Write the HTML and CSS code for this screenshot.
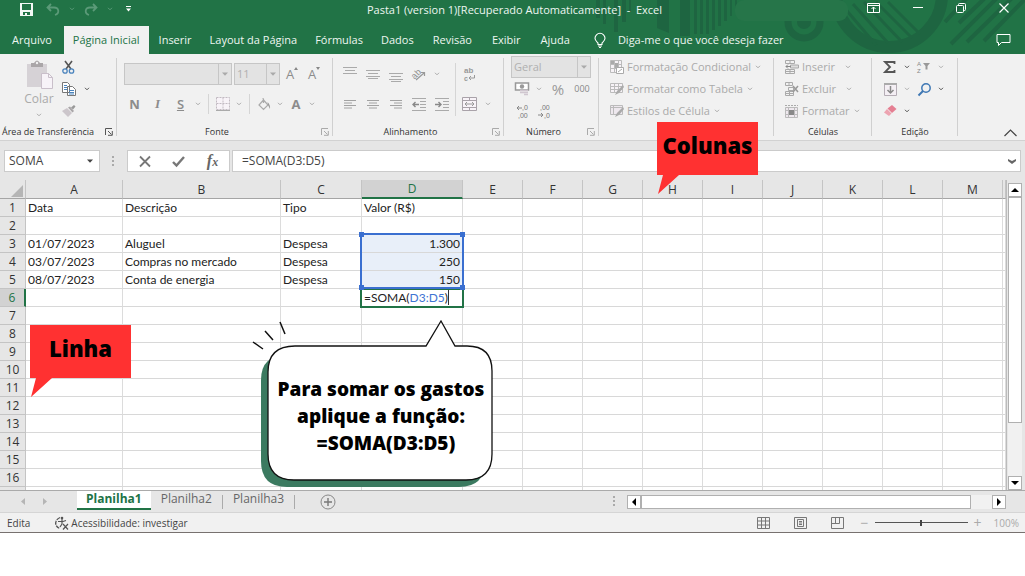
FILE: index.html
```html
<!DOCTYPE html>
<html lang="pt-BR">
<head>
<meta charset="utf-8">
<title>Pasta1 - Excel</title>
<link rel="stylesheet" href="styles.css">
</head>
<body>
<svg class="defs" aria-hidden="true">
  <symbol id="chev" viewBox="0 0 6 4"><path d="M1 .8l2 2 2-2" fill="none" stroke="currentColor"/></symbol>
  <symbol id="tri" viewBox="0 0 6 4"><path d="M0 .5h6L3 3.8z" fill="currentColor"/></symbol>
  <symbol id="launch" viewBox="0 0 8 8"><path d="M.5 7V.5H7M3 3l3.5 3.5M7.300 3v4.300H3" fill="none" stroke="currentColor"/></symbol>
</svg>
<div class="app">
  <header class="top">
    <svg class="decor" viewBox="0 0 440 54" aria-hidden="true">
      <g fill="#1e6541">
        <path d="M11 0h4v18h-4zM18 0h3v24h-3zM29 0h4v32h-4zM37 0h4v22h-4zM44 0h2v12h-2zM72 0h12v33l-12-5zM95 0h10v36H95zM109 0h3v34h-3zM115 0h3v34h-3zM121 0h3v34h-3zM127 0h3v30h-3zM133 0h3v26h-3zM139 0h3v21h-3zM145 0h2v16h-2zM150 0h2v12h-2z"/>
        <circle cx="219" cy="22" r="7"/>
      </g>
      <g fill="none" stroke="#1e6541">
        <circle cx="219" cy="22" r="16" stroke-width="7"/>
        <circle cx="304" cy="-6" r="53" stroke-width="12"/>
        <path d="M257 5l34 40M268 4l35 39M279 2l38 40M291 2l36 36M303 2l32 32" stroke-width="3"/>
        <path d="M360 22l22-24M374 23l26-25M366 44l46-46M382 42l45-44M399 41l42-43" stroke-width="4"/>
      </g>
      <rect x="150" y="0" width="113" height="21" rx="9" fill="#267549"/>
    </svg>
    <div class="titlebar">
      <div class="quick">
        <button aria-label="Salvar"><svg width="13" height="13" viewBox="0 0 13 13"><path fill="#f3f8f5" fill-rule="evenodd" d="M0 0h13v13H0zM2 1v6h9V1zM3 9v3h2v-2h2v2h3V9z"/></svg></button>
        <button class="dim" aria-label="Desfazer"><svg width="14" height="13" viewBox="0 0 14 13"><path d="M5 1L1.500 4.500 5 8M2 4.500h6c5 0 6 6 1 7.500" fill="none" stroke="currentColor" stroke-width="1.800"/></svg></button>
        <svg class="chev dim"><use href="#chev"/></svg>
        <button class="dim" aria-label="Refazer"><svg width="14" height="13" viewBox="0 0 14 13"><path d="M9 1l3.500 3.500L9 8M12 4.500H6c-5 0-6 6-1 7.500" fill="none" stroke="currentColor" stroke-width="1.800"/></svg></button>
        <svg class="chev dim"><use href="#chev"/></svg>
        <button class="more" aria-label="Personalizar"><svg width="5" height="6" viewBox="0 0 5 6"><path d="M0 0h5v1H0zM0 2.500h5L2.500 5.500z" fill="#fff"/></svg></button>
      </div>
      <h1 class="doc">Pasta1 (version 1)[Recuperado Automaticamente]&nbsp; -&nbsp; Excel</h1>
      <div class="window">
        <button aria-label="Opções da Faixa"><svg width="13" height="10" viewBox="0 0 13 10"><path d="M.5.500h12v9H.5zM.5 2.500h12M6.500 9V4M4.500 6l2-2 2 2" fill="none" stroke="#fff"/></svg></button>
        <button aria-label="Minimizar"><svg width="10" height="10" viewBox="0 0 10 10"><path d="M0 4.500h10" stroke="#fff"/></svg></button>
        <button aria-label="Restaurar"><svg width="10" height="10" viewBox="0 0 10 10"><rect x=".5" y="2.500" width="7" height="7" rx="1" fill="none" stroke="#fff"/><path d="M2.500 2V1.500q0-1 1-1h5q1 0 1 1v5q0 1-1 1H8" fill="none" stroke="#fff"/></svg></button>
        <button aria-label="Fechar"><svg width="10" height="10" viewBox="0 0 10 10"><path d="M.5.500l9 9M9.500.500l-9 9" stroke="#fff" stroke-width="1.200"/></svg></button>
      </div>
    </div>
    <nav class="tabs">
      <button>Arquivo</button>
      <button class="on">Página Inicial</button>
      <button class="snug">Inserir</button>
      <button class="snug">Layout da Página</button>
      <button class="snug">Fórmulas</button>
      <button class="snug">Dados</button>
      <button>Revisão</button>
      <button>Exibir</button>
      <button>Ajuda</button>
      <button class="tell"><svg width="12" height="15" viewBox="0 0 12 15"><path d="M4 11.500V10C2.500 8.500 1 7.500 1 5.300a5 5 0 0 1 10 0C11 7.500 9.500 8.500 8 10v1.500zM4 13h4M5 14.500h2" fill="none" stroke="#fff" stroke-width="1.100"/></svg>Diga-me o que você deseja fazer</button>
      <button class="comment" aria-label="Comentários"><svg width="15" height="12" viewBox="0 0 15 12"><path d="M1 .5h13v8H5.500l-3 3v-3H1z" fill="none" stroke="#fff"/></svg></button>
    </nav>
  </header>

  <section class="ribbon">
    <div class="group clip">
      <div class="body">
        <button class="paste"><svg width="27" height="29" viewBox="0 0 27 29"><path d="M1 4h20v23H1z" fill="#d6d2d6"/><path d="M5 3h3q3-5 6 0h3v4H5z" fill="#aaa6a8"/><circle cx="11" cy="3" r="1.200" fill="#f1f1f1"/><path d="M15.500 13.500h7l4 4v11h-11z" fill="#f7f3f8" stroke="#c9bfca"/><path d="M22.500 13.500v4h4" fill="none" stroke="#c9bfca"/></svg>Colar<svg class="chev"><use href="#chev"/></svg></button>
        <div class="tools">
          <button aria-label="Recortar"><svg width="13" height="14" viewBox="0 0 13 14"><path d="M3 1l6 8M10 1L4 9" stroke="#555" stroke-width="1.600"/><circle cx="3" cy="11" r="2.200" fill="none" stroke="#4b84bd" stroke-width="1.300"/><circle cx="9.500" cy="11" r="2.200" fill="none" stroke="#4b84bd" stroke-width="1.300"/></svg></button>
          <button class="dark" aria-label="Copiar"><svg width="14" height="14" viewBox="0 0 14 14"><path d="M.5.500h5l2 2v8h-7zM5.500 4.500h5l3 3v6h-8z" fill="#fff" stroke="#777"/><path d="M2 3.500h3M2 5.500h3M2 7.500h3M7 8.500h5M7 10.500h5M7 12h5" stroke="#4b84bd"/></svg><svg class="chev"><use href="#chev"/></svg></button>
          <button aria-label="Pincel"><svg width="14" height="12" viewBox="0 0 14 12"><path d="M9 2.500L12 0l1.500 1.500L11 4.500z" fill="#999"/><path d="M6 2.500l2-1L12 6l-1.500 1.500z" fill="#a9a6a8"/><path d="M0 6l5-3 5 5-4 4z" fill="#ccc6cb"/></svg></button>
        </div>
      </div>
      <footer>Área de Transferência<svg class="launch dark"><use href="#launch"/></svg></footer>
    </div>

    <div class="group font">
      <div class="body rows">
        <div class="line">
          <label class="combo wide"><select aria-label="Fonte"><option></option></select><svg class="tri"><use href="#tri"/></svg></label>
          <label class="combo"><select aria-label="Tamanho"><option>11</option></select><svg class="tri"><use href="#tri"/></svg></label>
          <button class="grow">A<svg width="4" height="3" viewBox="0 0 4 3"><path d="M0 3l2-3 2 3z" fill="#888"/></svg></button>
          <button class="grow">A<svg width="4" height="3" viewBox="0 0 4 3"><path d="M0 0l2 3 2-3z" fill="#888"/></svg></button>
        </div>
        <div class="line letters">
          <button><b>N</b></button><button><i>I</i></button><button><u>S</u></button>
          <svg class="chev"><use href="#chev"/></svg>
          <span class="bar"></span>
          <button class="narrow" aria-label="Bordas"><svg width="14" height="14" viewBox="0 0 14 14"><path d="M.5.500h13v12H.5zM7 .5v12M.5 6.500h13" fill="#f8f3f8" stroke="#c2bac2" stroke-dasharray="2 1"/><path d="M0 13.500h14" stroke="#aaa"/></svg></button>
          <svg class="chev"><use href="#chev"/></svg>
          <span class="bar"></span>
          <button class="narrow" aria-label="Preenchimento"><svg width="13" height="13" viewBox="0 0 13 13"><path d="M5.500 2L1 7l4.500 4.500L10 7zM5.500 5V1.500q0-1-1-1" fill="none" stroke="#aaa" stroke-width="1.200"/><path d="M9.500 4q3 3 2.500 7l-2-4z" fill="#999"/></svg></button>
          <svg class="chev"><use href="#chev"/></svg>
          <button class="narrow"><b>A</b></button>
          <svg class="chev"><use href="#chev"/></svg>
        </div>
      </div>
      <footer>Fonte<svg class="launch"><use href="#launch"/></svg></footer>
    </div>

    <div class="group align">
      <div class="body">
        <div class="rows">
          <div class="line">
            <button aria-label="Em cima"><svg width="14" height="15" viewBox="0 0 14 15"><path d="M0 .5h14M2 3.500h10M0 6.500h14" stroke="#aaa"/></svg></button>
            <button aria-label="No meio"><svg width="14" height="15" viewBox="0 0 14 15"><path d="M0 3.500h14M2 6.500h10M0 9.500h14M2 11.500h10" stroke="#aaa"/></svg></button>
            <button aria-label="Embaixo"><svg width="14" height="15" viewBox="0 0 14 15"><path d="M0 6.500h14M2 9.500h10M0 12.500h14M2 14.500h10" stroke="#aaa"/></svg></button>
            <button aria-label="Orientação"><svg width="15" height="13" viewBox="0 0 15 13"><text x="0" y="9" font-size="9" fill="#8f8f8f" transform="rotate(-45 5 6)">ab</text><path d="M5 12l8-7M10 4.500h3.500V8" fill="none" stroke="#999" stroke-width="1.200"/></svg></button>
            <svg class="chev"><use href="#chev"/></svg>
          </div>
          <div class="line">
            <button aria-label="Esquerda"><svg width="12" height="9" viewBox="0 0 12 9"><path d="M0 .5h12M0 3h8M0 5.500h12M0 8h8" stroke="#a2a2a2"/></svg></button>
            <button aria-label="Centro"><svg width="12" height="9" viewBox="0 0 12 9"><path d="M0 .5h12M2 3h8M0 5.500h12M2 8h8" stroke="#a2a2a2"/></svg></button>
            <button aria-label="Direita"><svg width="12" height="9" viewBox="0 0 12 9"><path d="M0 .5h12M4 3h8M0 5.500h12M4 8h8" stroke="#a2a2a2"/></svg></button>
            <button aria-label="Diminuir recuo"><svg width="14" height="13" viewBox="0 0 14 13"><path d="M0 .5h14M8 3.500h6M8 6.500h6M8 9.500h6M0 12.500h14" stroke="#aaa"/><path d="M7 6.500H1M3.500 4L1 6.500 3.500 9" fill="none" stroke="#888" stroke-width="1.400"/></svg></button>
            <button aria-label="Aumentar recuo"><svg width="14" height="13" viewBox="0 0 14 13"><path d="M0 .5h14M8 3.500h6M8 6.500h6M8 9.500h6M0 12.500h14" stroke="#aaa"/><path d="M0 6.500h6M3.500 4L6 6.500 3.500 9" fill="none" stroke="#888" stroke-width="1.400"/></svg></button>
          </div>
        </div>
        <span class="bar tall"></span>
        <div class="rows">
          <div class="line"><button aria-label="Quebrar texto"><svg width="13" height="15" viewBox="0 0 13 15"><text x="1" y="6" font-size="8" font-weight="bold" fill="#999">ab</text><text x="1" y="14" font-size="7" font-weight="bold" fill="#999">c</text><path d="M11.500 8v3H6M8 9l-2 2 2 2" fill="none" stroke="#999"/></svg></button></div>
          <div class="line"><button aria-label="Mesclar"><svg width="15" height="14" viewBox="0 0 15 14"><path d="M.5.500h14v13H.5zM.5 3.500h14M.5 10.500h14M7.500.500v3M7.500 10.500v3" fill="#f8f3f8" stroke="#a9a2a9"/><path d="M3 7h9M5 5L3 7l2 2M10 5l2 2-2 2" fill="none" stroke="#999"/></svg></button><svg class="chev"><use href="#chev"/></svg></div>
        </div>
      </div>
      <footer>Alinhamento<svg class="launch"><use href="#launch"/></svg></footer>
    </div>

    <div class="group number">
      <div class="body rows">
        <label class="combo wide"><select aria-label="Formato"><option>Geral</option></select><svg class="tri"><use href="#tri"/></svg></label>
        <div class="line">
          <button aria-label="Moeda"><svg width="15" height="14" viewBox="0 0 15 14"><path d="M.5 1h13v7H.5z" fill="#fff" stroke="#999" stroke-width="1.500"/><circle cx="7" cy="4.500" r="2.200" fill="#999"/><path d="M5 8.500h8M5 10.500h8M9 12.500h4" stroke="#cfc6cf" stroke-width="1.500"/></svg></button>
          <svg class="chev"><use href="#chev"/></svg>
          <button class="pct">%</button>
          <button class="thou">000</button>
        </div>
        <div class="line">
          <button aria-label="Aumentar casas"><svg width="13" height="15" viewBox="0 0 13 15"><text x="6" y="6" font-size="7" fill="#777">,0</text><text x="2" y="14" font-size="7" fill="#777">,00</text><path d="M6 4H1M3 2L1 4l2 2" fill="none" stroke="#888"/></svg></button>
          <button aria-label="Diminuir casas"><svg width="13" height="15" viewBox="0 0 13 15"><text x="2" y="6" font-size="7" fill="#777">,00</text><text x="6" y="14" font-size="7" fill="#777">,0</text><path d="M0 11h5M3 9l2 2-2 2" fill="none" stroke="#888"/></svg></button>
        </div>
      </div>
      <footer>Número<svg class="launch"><use href="#launch"/></svg></footer>
    </div>

    <div class="group styles">
      <div class="body rows list">
        <button><svg width="14" height="14" viewBox="0 0 14 14"><path d="M.5.500h11v12H.5zM4.500.500v12M8.500.500v12M.5 4.500h11M.5 8.500h11" fill="#f6f2f6" stroke="#bbb"/><path d="M1 1h3v3H1zM5 3h3v5H5z" fill="#aaa"/><path d="M6.500 7.500h7v6h-7zM8 12l4-3" fill="#fff" stroke="#aaa"/></svg>Formatação Condicional<svg class="chev"><use href="#chev"/></svg></button>
        <button><svg width="14" height="14" viewBox="0 0 14 14"><path d="M.5 1.500h12v9H.5zM4.500 1.500v9M8.500 1.500v9M.5 4.500h12M.5 7.500h12" fill="#f6f2f6" stroke="#bbb"/><path d="M5 13l2-4 6-6 1 2-5 6z" fill="#aaa"/></svg>Formatar como Tabela<svg class="chev"><use href="#chev"/></svg></button>
        <button><svg width="14" height="14" viewBox="0 0 14 14"><path d="M.5 1.500h12v9H.5zM.5 3.500h12M3.500 1.500v9" fill="#eee8ee" stroke="#bbb"/><path d="M5 13l2-4 6-6 1 2-5 6z" fill="#aaa"/></svg>Estilos de Célula<svg class="chev"><use href="#chev"/></svg></button>
      </div>
    </div>

    <div class="group cells">
      <div class="body rows list">
        <button><svg width="14" height="14" viewBox="0 0 14 14"><path d="M.5.500h9v3h-9zM5 .5v3M.5 9.500h9v4h-9zM5 9.500v4M.5 11.500h9" fill="none" stroke="#aaa"/><path d="M5.500 5h8v3h-8z" fill="#ddd" stroke="#aaa"/><path d="M6 6.500H1M3 4.500l-2 2 2 2" fill="none" stroke="#888"/></svg>Inserir<svg class="chev far"><use href="#chev"/></svg></button>
        <button><svg width="14" height="14" viewBox="0 0 14 14"><path d="M.5.500h7v3h-7zM4 .5v3M3.500 5.500h5v3h-5zM.5 9.500h8v4h-8zM4.500 9.500v4M.5 11.500h8" fill="none" stroke="#aaa"/><path d="M8 4l5 6M13 4l-5 6" stroke="#999" stroke-width="1.500"/></svg>Excluir<svg class="chev far"><use href="#chev"/></svg></button>
        <button><svg width="14" height="14" viewBox="0 0 14 14"><path d="M0 1.500h13" stroke="#aaa" stroke-dasharray="2 1"/><path d="M.5 3.500h12v10H.5zM3.500 3.500v10M9.500 3.500v10M.5 6.500h12M.5 10.500h12" fill="#eee8ee" stroke="#bbb"/><path d="M4 6h5v5H4z" fill="#888"/></svg>Formatar<svg class="chev"><use href="#chev"/></svg></button>
      </div>
      <footer>Células</footer>
    </div>

    <div class="group edit">
      <div class="body rows">
        <div class="line dark"><button aria-label="Soma"><svg width="12" height="12" viewBox="0 0 12 12"><path d="M10.500 3V1H1l5 5-5 5h9.500V9" fill="none" stroke="#555" stroke-width="1.800"/></svg></button><svg class="chev"><use href="#chev"/></svg><button class="light" aria-label="Classificar"><svg width="14" height="13" viewBox="0 0 14 13"><text x="0" y="5" font-size="6" fill="#888">A</text><text x="0" y="12" font-size="6" fill="#888">Z</text><path d="M6 2h7L10.500 5v3.500H8.500V5z" fill="#999"/></svg></button><svg class="chev light"><use href="#chev"/></svg></div>
        <div class="line dark"><button aria-label="Preencher"><svg width="13" height="13" viewBox="0 0 13 13"><path d="M.5.500h12v12H.5z" fill="#f4eff4" stroke="#b5adb5"/><path d="M0 1h13" stroke="#aaa" stroke-width="2"/><path d="M6.500 3v7M3.500 7l3 3 3-3" fill="none" stroke="#888" stroke-width="1.500"/></svg></button><svg class="chev light"><use href="#chev"/></svg><button aria-label="Localizar"><svg width="15" height="13" viewBox="0 0 15 13"><circle cx="9" cy="5" r="4.200" fill="none" stroke="#3f78b4" stroke-width="1.500"/><path d="M6 8l-4.500 4.500" stroke="#3f78b4" stroke-width="2"/></svg></button><svg class="chev"><use href="#chev"/></svg></div>
        <div class="line dark"><button aria-label="Limpar"><svg width="13" height="12" viewBox="0 0 13 12"><path d="M8 0l4.500 4L8 8 3.500 3.500z" fill="#e57f92"/><path d="M3 4l4.500 4.500L5 11 0 7.500z" fill="#eda4b1"/></svg></button><svg class="chev"><use href="#chev"/></svg></div>
      </div>
      <footer>Edição</footer>
    </div>
    <button class="collapse" aria-label="Recolher"><svg width="13" height="8" viewBox="0 0 13 8"><path d="M.5 7l6-6 6 6" fill="none" stroke="#444" stroke-width="1.200"/></svg></button>
  </section>

  <section class="formula">
    <label class="box name"><input aria-label="Caixa de nome" value="SOMA"><svg class="tri"><use href="#tri"/></svg></label>
    <svg class="dots" width="2" height="11" viewBox="0 0 2 11"><path d="M0 0h2v2H0zM0 4h2v2H0zM0 8h2v2H0z" fill="#aaa"/></svg>
    <div class="box acts">
      <button aria-label="Cancelar"><svg width="12" height="11" viewBox="0 0 12 11"><path d="M1 .5l10 10M11 .5l-10 10" stroke="#777" stroke-width="1.800"/></svg></button>
      <button aria-label="Inserir fórmula"><svg width="13" height="11" viewBox="0 0 13 11"><path d="M1 6l3.500 3.500L12 1" fill="none" stroke="#777" stroke-width="2.400"/></svg></button>
      <button class="fx"><i>f<small>x</small></i></button>
    </div>
    <label class="box entry"><input aria-label="Fórmula" value="=SOMA(D3:D5)"><svg width="8" height="5" viewBox="0 0 8 5"><path d="M0 0l4 2 4-2v2L4 5 0 2z" fill="#666"/></svg></label>
  </section>

  <main class="sheet">
    <div class="view">
    <table class="grid">
      <colgroup><col class="n"><col class="a"><col class="b"><col class="c"><col class="d"><col><col><col><col><col><col><col><col><col><col class="z"></colgroup>
      <thead><tr><th><svg class="corner" width="12" height="12" viewBox="0 0 12 12"><path d="M12 0v12H0z" fill="#b5b5b5"/></svg></th><th>A</th><th>B</th><th>C</th><th class="cur">D</th><th>E</th><th>F</th><th>G</th><th>H</th><th>I</th><th>J</th><th>K</th><th>L</th><th>M</th><th></th></tr></thead>
      <tbody>
        <tr><th>1</th><td>Data</td><td>Descrição</td><td>Tipo</td><td>Valor (R$)</td><td></td><td></td><td></td><td></td><td></td><td></td><td></td><td></td><td></td><td></td></tr>
        <tr><th>2</th><td></td><td></td><td></td><td></td><td></td><td></td><td></td><td></td><td></td><td></td><td></td><td></td><td></td><td></td></tr>
        <tr><th>3</th><td>01/07/2023</td><td>Aluguel</td><td>Despesa</td><td class="sel first">1.300<span class="range"><i></i><i></i><i></i><i></i></span></td><td></td><td></td><td></td><td></td><td></td><td></td><td></td><td></td><td></td><td></td></tr>
        <tr><th>4</th><td>03/07/2023</td><td>Compras no mercado</td><td>Despesa</td><td class="sel">250</td><td></td><td></td><td></td><td></td><td></td><td></td><td></td><td></td><td></td><td></td></tr>
        <tr><th>5</th><td>08/07/2023</td><td>Conta de energia</td><td>Despesa</td><td class="sel">150</td><td></td><td></td><td></td><td></td><td></td><td></td><td></td><td></td><td></td><td></td></tr>
        <tr><th class="cur">6</th><td></td><td></td><td></td><td class="active">=SOMA(<span class="ref">D3:D5</span><span class="caret">)</span><span class="ring"></span></td><td></td><td></td><td></td><td></td><td></td><td></td><td></td><td></td><td></td><td></td></tr>
        <tr><th>7</th><td></td><td></td><td></td><td></td><td></td><td></td><td></td><td></td><td></td><td></td><td></td><td></td><td></td><td></td></tr>
        <tr><th>8</th><td></td><td></td><td></td><td></td><td></td><td></td><td></td><td></td><td></td><td></td><td></td><td></td><td></td><td></td></tr>
        <tr><th>9</th><td></td><td></td><td></td><td></td><td></td><td></td><td></td><td></td><td></td><td></td><td></td><td></td><td></td><td></td></tr>
        <tr><th>10</th><td></td><td></td><td></td><td></td><td></td><td></td><td></td><td></td><td></td><td></td><td></td><td></td><td></td><td></td></tr>
        <tr><th>11</th><td></td><td></td><td></td><td></td><td></td><td></td><td></td><td></td><td></td><td></td><td></td><td></td><td></td><td></td></tr>
        <tr><th>12</th><td></td><td></td><td></td><td></td><td></td><td></td><td></td><td></td><td></td><td></td><td></td><td></td><td></td><td></td></tr>
        <tr><th>13</th><td></td><td></td><td></td><td></td><td></td><td></td><td></td><td></td><td></td><td></td><td></td><td></td><td></td><td></td></tr>
        <tr><th>14</th><td></td><td></td><td></td><td></td><td></td><td></td><td></td><td></td><td></td><td></td><td></td><td></td><td></td><td></td></tr>
        <tr><th>15</th><td></td><td></td><td></td><td></td><td></td><td></td><td></td><td></td><td></td><td></td><td></td><td></td><td></td><td></td></tr>
        <tr><th>16</th><td></td><td></td><td></td><td></td><td></td><td></td><td></td><td></td><td></td><td></td><td></td><td></td><td></td><td></td></tr>
        <tr class="rest"><th></th><td></td><td></td><td></td><td></td><td></td><td></td><td></td><td></td><td></td><td></td><td></td><td></td><td></td><td></td></tr>
      </tbody>
    </table>
    </div>
    <div class="vscroll">
      <button aria-label="Acima"><svg width="8" height="4" viewBox="0 0 8 4"><path d="M0 4l4-4 4 4z"/></svg></button>
      <div class="track"><div class="thumb"></div></div>
      <button aria-label="Abaixo"><svg width="8" height="4" viewBox="0 0 8 4"><path d="M0 0l4 4 4-4z"/></svg></button>
    </div>
  </main>

  <div class="sheets">
    <div class="nav">
      <button aria-label="Anterior"><svg width="4" height="7" viewBox="0 0 4 7"><path d="M4 0v7L0 3.500z" fill="#b5b5b5"/></svg></button>
      <button aria-label="Próxima"><svg width="4" height="7" viewBox="0 0 4 7"><path d="M0 0v7l4-3.500z" fill="#b5b5b5"/></svg></button>
    </div>
    <button class="tab on">Planilha1</button>
    <button class="tab">Planilha2</button>
    <button class="tab">Planilha3</button>
    <button class="add" aria-label="Nova planilha"><svg width="16" height="16" viewBox="0 0 16 16"><path d="M8 4v8M4 8h8" stroke="#777" stroke-width="1.400"/><circle cx="8" cy="8" r="7" fill="none" stroke="#888"/></svg></button>
    <div class="hscroll">
      <svg class="dots" width="2" height="11" viewBox="0 0 2 11"><path d="M0 0h2v2H0zM0 4h2v2H0zM0 8h2v2H0z" fill="#aaa"/></svg>
      <button aria-label="Esquerda"><svg width="4" height="8" viewBox="0 0 4 8"><path d="M4 0v8L0 4z"/></svg></button>
      <div class="track"><div class="thumb"></div></div>
      <button aria-label="Direita"><svg width="4" height="8" viewBox="0 0 4 8"><path d="M0 0v8l4-4z"/></svg></button>
    </div>
  </div>

  <footer class="status">
    <span class="mode">Edita</span>
    <button class="acc"><svg width="14" height="14" viewBox="0 0 14 14"><path d="M5 1.500C-1 4-.5 11 5 12.500" fill="none" stroke="#555" stroke-width="1.300" stroke-dasharray="4 1"/><circle cx="7" cy="2" r="1.300" fill="#555"/><path d="M3 5.500h5l3-1M7 3v5M5 11l2-3M8 8l5 5.500M13 8l-5 5.500" fill="none" stroke="#555" stroke-width="1.200"/></svg>Acessibilidade: investigar</button>
    <div class="views">
      <button aria-label="Normal"><svg width="13" height="12" viewBox="0 0 13 12"><path d="M.5.500h12v11H.5zM4.500.500v11M8.500.500v11M.5 4h12M.5 8h12" fill="none" stroke="#777"/></svg></button>
      <button aria-label="Layout"><svg width="13" height="12" viewBox="0 0 13 12"><path d="M.5.500h12v11H.5zM3.500 2.500h6v7h-6zM5 4.500h3M5 6h3M5 7.500h3" fill="none" stroke="#777"/></svg></button>
      <button aria-label="Quebras"><svg width="13" height="12" viewBox="0 0 13 12"><path d="M.5.500h12v11H.5zM4.500.500v6M8.500.500v6M.5 6.500h8" fill="none" stroke="#777"/></svg></button>
    </div>
    <div class="zoom"><button>−</button><input type="range" aria-label="Zoom" min="0" max="200" value="100"><button>+</button><span>100%</span></div>
  </footer>

  <div class="note colunas"><svg viewBox="0 0 101 73" aria-hidden="true"><path d="M0 0h101v53H22L1 72 6 53H0z" fill="#ff3131"/></svg><strong>Colunas</strong></div>
  <div class="note linha"><svg viewBox="0 0 101 73" aria-hidden="true"><path d="M0 0h101v53H22L1 72 6 53H0z" fill="#ff3131"/></svg><strong>Linha</strong></div>
  <div class="bubble">
    <svg viewBox="0 0 242 170" aria-hidden="true"><path d="M37 36h173q25 0 25 25v81q0 26-26 26H37q-26 0-26-26V61q0-25 26-25z" fill="#3b7a60" /><path d="M45 27h131l15-25 14 25h12q25 0 25 25v83q0 26-26 26H44q-26 0-26-26V53q0-26 27-26z" fill="#fff" stroke="#111" stroke-width="1.300"/><path d="M3 23l10 7M15 12l8 9M30 3l5 12" fill="none" stroke="#111" stroke-width="1.500"/></svg>
    <p>Para somar os gastos<br>aplique a função:<br>&nbsp;&nbsp;=SOMA(D3:D5)</p>
  </div>
</div>
</body>
</html>
```

FILE: styles.css
```css
* { box-sizing: border-box; }
body { margin: 0; background: #fff; font: 11px/16px "Open Sans", "Noto Sans", sans-serif; color: #333; }
button { font: inherit; color: inherit; background: none; border: 0; padding: 0; display: inline-flex; align-items: center; justify-content: center; white-space: nowrap; }
select, input { font: inherit; color: inherit; background: none; border: 0; padding: 0; min-width: 0; appearance: none; outline: 0; }
svg { flex: none; display: block; overflow: visible; }
svg text { font-family: "Liberation Sans", sans-serif; }
.defs { position: absolute; width: 0; height: 0; }
.chev { width: 6px; height: 4px; }
.tri { width: 6px; height: 4px; }
.dark { color: #555; }
.light { color: #b0b0b0; }

.app { position: relative; display: flex; flex-direction: column; overflow: hidden; }

.top { position: relative; background: #217346; color: #eef6f1; }
.decor { position: absolute; right: 0; top: 0; width: 440px; height: 54px; overflow: hidden; }
.titlebar { position: relative; display: grid; grid-template-columns: 1fr auto 1fr; height: 26px; padding: 0 16px 0 20px; }
.quick { display: flex; align-items: center; gap: 13px; height: 18px; }
.quick .chev { margin: 0 -4px; }
.quick .more { margin-left: 4px; }
.dim { color: #5b9a78; }
.doc { margin: 0; font-size: 11px; font-weight: 400; line-height: 19px; }
.window { display: flex; justify-content: flex-end; align-items: center; gap: 33px; height: 16px; }
.tabs { position: relative; display: flex; height: 28px; padding-left: 2px; }
.tabs button { padding: 0 10px; }
.tabs .on { background: #f1f1f1; color: #217346; padding: 0 9px; margin-left: 2px; }
.tabs .snug { padding: 0 9px; }
.tabs .on + .snug { padding-left: 10px; }
.tabs .tell { gap: 12px; padding-left: 14px; }
.tabs .comment { margin-left: auto; padding: 0 14px; }

.ribbon { display: flex; background: #f1f1f1; height: 87px; border-bottom: 1px solid #d2d2d2; color: #aaa; }
.group { position: relative; display: flex; flex-direction: column; }
.group::after { content: ""; position: absolute; right: 0; top: 4px; bottom: 4px; width: 1px; background: #d0d0d0; }
.group .body { flex: 1; display: flex; }
.group > footer { position: relative; color: #333; font-size: 9px; line-height: 16px; text-align: center; }
.launch { position: absolute; right: 4px; top: 4px; width: 8px; height: 8px; color: #aaa; }
.launch.dark { color: #555; }
.clip { width: 117px; }
.clip > footer { text-align: left; padding-left: 2px; }
.font { width: 216px; }
.font > footer, .align > footer, .number > footer { padding-right: 16px; }
.align { width: 171px; }
.number { width: 95px; }
.styles { width: 175px; }
.cells { width: 98px; }
.edit { width: 86px; }
.group .rows { flex-direction: column; display: flex; }
.line { display: flex; align-items: center; height: 22px; }
.bar { width: 1px; height: 20px; background: #d5d5d5; }

.clip .body { padding: 6px 0 0 20px; gap: 4px; align-items: flex-start; }
.paste { flex-direction: column; width: 38px; font-size: 12px; line-height: 20px; }
.paste .chev { margin-top: 4px; }
.tools { display: flex; flex-direction: column; gap: 8px; align-items: flex-start; }
.tools button { gap: 8px; height: 14px; }

.font .body { padding: 9px 0 0 7px; gap: 8px; }
.font .line { gap: 2px; }
.combo { display: flex; align-items: center; width: 46px; height: 22px; background: #e3e3e3; border: 1px solid #c6c6c6; }
.combo select { flex: 1; align-self: stretch; padding-left: 2px; border-right: 1px solid #c6c6c6; font-size: 11px; color: #b0b0b0; }
.combo .tri { margin: 0 3px; }
.font .wide { width: 108px; }
.grow { width: 20px; font-size: 13px; color: #8c8c8c; align-items: flex-start; }
.grow svg { margin-top: 1px; }
.letters button { width: 21px; font-size: 13px; color: #8c8c8c; }
.letters button i { font-family: "Liberation Serif", serif; font-weight: 700; }
.letters u { font-weight: 600; }
.letters .narrow { width: 18px; }
.letters .chev { margin: 0 2px; }
.letters .bar { margin: 0 3px; }

.align .body { padding: 9px 0 0 5px; }
.align .rows { gap: 8px; }
.align .line button { width: 23px; }
.align .chev { margin-left: 4px; }
.align .tall { height: 53px; margin: 0 2px 0 2px; }

.number .body { padding: 2px 0 0 7px; }
.number .wide { width: 80px; }
.number .line button { width: 22px; }
.number .line .pct { font-size: 15px; width: 26px; color: #999; }
.number .line .thou { font-size: 9px; color: #888; }
.number .chev { margin: 0 3px; }

.list { align-items: flex-start; }
.group .list { padding: 2px 0 0 11px; }
.list button { height: 22px; gap: 3px; font-size: 11px; }
.list .chev { margin-left: 1px; }
.list .far { margin-left: 7px; }

.edit .body { padding: 2px 0 0 9px; }
.edit .line button { width: 18px; }
.edit .chev { margin: 0 5px; }
.collapse { margin: auto 8px 3px auto; }

.formula { display: flex; height: 39px; background: #e6e6e6; padding: 9px 4px 8px 4px; color: #444; }
.box { display: flex; align-items: center; background: #fff; border: 1px solid #cbcbcb; font-size: 12px; }
.name { width: 96px; padding: 0 6px 0 4px; }
.name input { flex: 1; }
.formula .dots { margin: auto 13px auto 12px; }
.acts { width: 103px; justify-content: space-around; }
.fx { font: 700 16px/18px "Liberation Serif", serif; color: #666; }
.fx small { font-size: 12px; }
.entry { flex: 1; margin-left: 2px; padding: 0 4px 0 9px; }
.entry input { flex: 1; }

.sheet { display: flex; background: #e6e6e6; }
.view { flex: 1; border-right: 1px solid #bbb; background: #fff; }
.grid { width: 100%; table-layout: fixed; border-collapse: separate; border-spacing: 0; }
.grid .n { width: 26px; }
.grid .a { width: 97px; }
.grid .b { width: 158px; }
.grid .c { width: 81px; }
.grid .d { width: 101px; }
.grid .z { width: 3px; }
.grid th, .grid td { height: 18px; padding: 0 2px; line-height: 17px; white-space: nowrap; border-right: 1px solid #dcdcdc; border-bottom: 1px solid #d8d8d8; }
.grid th { background: #e6e6e6; font-size: 12px; font-weight: 400; text-align: center; color: #333; border-color: #c4c4c4; padding: 0; }
.grid thead th { height: 19px; border-bottom-color: #a5a5a5; }
.grid td { font-family: Lato, sans-serif; font-size: 12px; color: #222; }
.grid thead .cur { background: #d2d2d2; color: #217346; border-bottom: 2px solid #217346; line-height: 16px; }
.grid tbody .cur { background: #d2d2d2; color: #217346; border-right: 2px solid #217346; }
.grid .corner { margin: 4px 2px 0 auto; }
.grid .rest th, .grid .rest td { height: 3px; border-bottom: 0; }
.grid .sel { background: #e8eff9; text-align: right; }
.grid .first, .grid .active { position: relative; }
.range { position: absolute; z-index: 2; left: -2px; top: -2px; right: -2px; height: 56px; border: 2px solid #3a6fd0; }
.range i { position: absolute; width: 5px; height: 5px; background: #3a6fd0; left: -3px; top: -3px; }
.range i:nth-child(2) { left: auto; right: -3px; }
.range i:nth-child(3) { top: auto; bottom: -3px; }
.range i:nth-child(4) { left: auto; right: -3px; top: auto; bottom: -3px; }
.ring { position: absolute; left: -2px; top: -1px; right: -2px; bottom: -2px; border: 2px solid #217346; }
.ref { color: #3f74d3; }
.caret { border-right: 1px solid #333; }

.vscroll { display: flex; flex-direction: column; width: 18px; padding: 3px 3px 0 1px; }
.vscroll button, .hscroll button { background: #fff; border: 1px solid #b0b0b0; width: 14px; height: 14px; }
.track { flex: 1; background: #f1f1f1; }
.thumb { background: #fff; border: 1px solid #b0b0b0; }
.vscroll .thumb { height: 81%; }

.sheets { display: flex; height: 22px; background: #e6e6e6; border-top: 1px solid #aaa; font-size: 12px; color: #666; }
.nav { display: flex; align-items: center; justify-content: center; gap: 18px; width: 77px; padding-right: 10px; }
.tab { position: relative; padding: 0 11px 6px 10px; }
.tab::after { content: ""; position: absolute; right: 0; top: 4px; height: 14px; width: 1px; background: #aaa; }
.tab.on { background: #fff; color: #217346; font-weight: 700; border-bottom: 2px solid #217346; margin-bottom: 2px; padding: 0 9px 2px; }
.tab.on::after { display: none; }
.add { margin-left: 25px; }
.hscroll { display: flex; align-items: center; width: 412px; margin-left: auto; padding-right: 19px; }
.hscroll .dots { margin-right: 12px; }
.hscroll .track { display: flex; height: 14px; }
.hscroll .thumb { width: 94%; }

.status { display: flex; align-items: center; height: 21px; background: #f1f1f1; border-top: 1px solid #d5d5d5; border-bottom: 1px solid #77716f; padding: 0 6px 0 7px; font-size: 10px; color: #444; }
.acc { margin-left: 25px; gap: 2px; }
.views { display: flex; gap: 24px; margin-left: auto; }
.zoom { display: flex; align-items: center; gap: 3px; margin-left: 16px; color: #aaa; }
.zoom button { font-size: 14px; width: 10px; }
.zoom span { margin-left: 8px; }
.zoom input { width: 93px; height: 10px; background: linear-gradient(#555, #555) center / 100% 1px no-repeat; }
.zoom input::-webkit-slider-thumb { appearance: none; width: 2px; height: 6px; background: #444; }

.note { position: absolute; width: 101px; height: 73px; z-index: 4; color: #000; text-align: center; }
.note svg { position: absolute; inset: 0; }
.note strong { position: relative; font-size: 22px; font-weight: 800; line-height: 46px; }
.colunas { left: 657px; top: 122px; }
.linha { left: 30px; top: 325px; }
.bubble { position: absolute; z-index: 3; left: 250px; top: 319px; width: 242px; height: 170px; }
.bubble svg { position: absolute; inset: 0; }
.bubble p { position: relative; margin: 0; padding: 57px 0 0 20px; font-size: 19px; font-weight: 800; line-height: 27px; color: #000; text-align: center; white-space: nowrap; }
```
